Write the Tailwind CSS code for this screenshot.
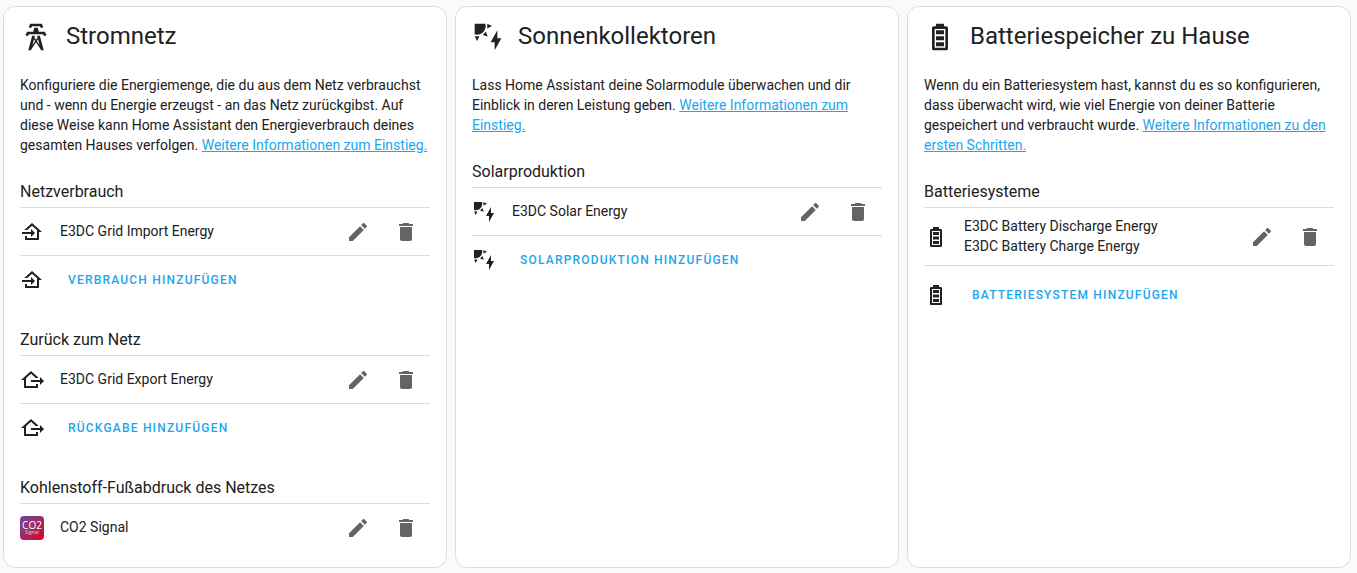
<!DOCTYPE html>
<html lang="de">
<head>
<meta charset="utf-8">
<meta name="viewport" content="width=device-width, initial-scale=1">
<title>Energie</title>
<script src="https://cdn.jsdelivr.net/npm/@tailwindcss/browser@4"></script>
</head>
<body class="min-h-screen bg-[#fafafa] font-[Roboto,sans-serif] text-sm leading-5 text-[#212121]">
<svg class="hidden" aria-hidden="true">
  <symbol id="tower" viewBox="0 0 24 24"><path d="M8.28,5.45L6.5,4.55L7.76,2H16.23L17.5,4.55L15.72,5.44L15,4H9L8.28,5.45M18.62,8H14.09L13.3,5H10.7L9.91,8H5.38L4.1,10.55L5.89,11.44L6.62,10H17.38L18.1,11.45L19.89,10.56L18.62,8M17.77,22H15.7L15.46,21.1L12,15.9L8.53,21.1L8.3,22H6.23L9.12,11H11.19L10.83,12.35L12,14.1L13.16,12.35L12.81,11H14.88L17.77,22M11.4,15L10.5,13.65L9.32,18.13L11.4,15M14.68,18.12L13.5,13.64L12.6,15L14.68,18.12Z"/></symbol>
  <symbol id="solar" viewBox="0 0 24 24"><path d="M11.45,2V5.55L15,3.77L11.45,2M10.45,8L8,10.46L11.75,11.71L10.45,8M2,11.45L3.77,15L5.55,11.45H2M10,2H2V10C2.57,10.17 3.17,10.25 3.77,10.25C7.35,10.26 10.26,7.35 10.27,3.75C10.26,3.16 10.17,2.57 10,2M17,22V16H14L19,7V13H22L17,22Z"/></symbol>
  <symbol id="battery" viewBox="0 0 24 24"><path d="M16 20H8V6H16M16.67 4H15V2H9V4H7.33C6.6 4 6 4.6 6 5.33V20.67C6 21.4 6.6 22 7.33 22H16.67C17.41 22 18 21.41 18 20.67V5.33C18 4.6 17.4 4 16.67 4M15 16H9V19H15V16M15 7H9V10H15V7M15 11.5H9V14.5H15V11.5Z"/></symbol>
  <symbol id="import" viewBox="0 0 24 24"><path d="M15 13L11 17V14H2V12H11V9L15 13M5 20V16H7V18H17V10.19L12 5.69L7.21 10H4.22L12 3L22 12H19V20H5Z"/></symbol>
  <symbol id="export" viewBox="0 0 24 24"><path d="M24 13L20 17V14H11V12H20V9L24 13M4 20V12H1L11 3L18 9.3V10H15.79L11 5.69L6 10.19V18H16V16H18V20H4Z"/></symbol>
  <symbol id="pencil" viewBox="0 0 24 24"><path d="M20.71,7.04C21.1,6.65 21.1,6 20.71,5.63L18.37,3.29C18,2.9 17.35,2.9 16.96,3.29L15.12,5.12L18.87,8.87M3,17.25V21H6.75L17.81,9.93L14.06,6.18L3,17.25Z"/></symbol>
  <symbol id="trash" viewBox="0 0 24 24"><path d="M19,4H15.5L14.5,3H9.5L8.5,4H5V6H19M6,19A2,2 0 0,0 8,21H16A2,2 0 0,0 18,19V7H6V19Z"/></symbol>
</svg>

<main class="grid grid-cols-3 gap-2 pt-1.5 pr-1.5 pb-1 pl-[3px]">

  <section class="rounded-xl border border-[#dcdcdc] bg-white px-4 pb-4">
    <h1 class="mb-2 flex h-15 items-center gap-3.5 text-2xl"><svg class="size-8 fill-current" aria-hidden="true"><use href="#tower"/></svg><span class="pb-0.5">Stromnetz</span></h1>
    <p>Konfiguriere die Energiemenge, die du aus dem Netz verbrauchst und - wenn du Energie erzeugst - an das Netz zurückgibst. Auf diese Weise kann Home Assistant den Energieverbrauch deines gesamten Hauses verfolgen. <a href="#" class="text-[#1ba6ef] underline">Weitere Informationen zum Einstieg.</a></p>

    <h2 class="mt-[25px] border-b border-[#dcdcdc] pb-[3px] text-base">Netzverbrauch</h2>
    <div class="flex h-12 items-center border-b border-[#dcdcdc]">
      <svg class="mr-4 size-6 fill-current" aria-hidden="true"><use href="#import"/></svg>
      <span class="flex-1 pb-0.5">E3DC Grid Import Energy</span>
      <button type="button" aria-label="Bearbeiten" class="grid h-full w-12 place-items-center text-[#646464]"><svg class="size-6 fill-current"><use href="#pencil"/></svg></button>
      <button type="button" aria-label="Löschen" class="grid h-full w-12 place-items-center text-[#646464]"><svg class="size-6 fill-current"><use href="#trash"/></svg></button>
    </div>
    <div class="flex h-[47px] items-center">
      <svg class="mr-4 size-6 fill-current" aria-hidden="true"><use href="#import"/></svg>
      <button type="button" class="h-9 px-2 text-xs font-medium tracking-widest text-[#1ba6ef] uppercase">Verbrauch hinzufügen</button>
    </div>

    <h2 class="mt-[25px] border-b border-[#dcdcdc] pb-[3px] text-base">Zurück zum Netz</h2>
    <div class="flex h-12 items-center border-b border-[#dcdcdc]">
      <svg class="mr-4 size-6 fill-current" aria-hidden="true"><use href="#export"/></svg>
      <span class="flex-1 pb-0.5">E3DC Grid Export Energy</span>
      <button type="button" aria-label="Bearbeiten" class="grid h-full w-12 place-items-center text-[#646464]"><svg class="size-6 fill-current"><use href="#pencil"/></svg></button>
      <button type="button" aria-label="Löschen" class="grid h-full w-12 place-items-center text-[#646464]"><svg class="size-6 fill-current"><use href="#trash"/></svg></button>
    </div>
    <div class="flex h-[47px] items-center">
      <svg class="mr-4 size-6 fill-current" aria-hidden="true"><use href="#export"/></svg>
      <button type="button" class="h-9 px-2 text-xs font-medium tracking-widest text-[#1ba6ef] uppercase">Rückgabe hinzufügen</button>
    </div>

    <h2 class="mt-[25px] border-b border-[#dcdcdc] pb-[3px] text-base">Kohlenstoff-Fußabdruck des Netzes</h2>
    <div class="flex h-[47px] items-center">
      <svg class="mr-4 size-6" viewBox="0 0 24 24" role="img" aria-label="CO2 Signal">
        <defs><linearGradient id="co2" x1="0" y1="0" x2="1" y2="1"><stop offset="0" stop-color="#67489a"/><stop offset=".5" stop-color="#a12b65"/><stop offset="1" stop-color="#dc0024"/></linearGradient></defs>
        <rect width="24" height="24" rx="4" fill="url(#co2)"/>
        <text x="12" y="13" text-anchor="middle" font-family="Open Sans, sans-serif" font-size="10" font-weight="400" fill="#fff">CO2</text>
        <text x="12" y="18" text-anchor="middle" font-family="Open Sans, sans-serif" font-size="5" fill="#f0c4d6">Signal</text>
      </svg>
      <span class="flex-1 pb-0.5">CO2 Signal</span>
      <button type="button" aria-label="Bearbeiten" class="grid h-full w-12 place-items-center text-[#646464]"><svg class="size-6 fill-current"><use href="#pencil"/></svg></button>
      <button type="button" aria-label="Löschen" class="grid h-full w-12 place-items-center text-[#646464]"><svg class="size-6 fill-current"><use href="#trash"/></svg></button>
    </div>
  </section>

  <section class="rounded-xl border border-[#dcdcdc] bg-white px-4 pb-4">
    <h1 class="mb-2 flex h-15 items-center gap-3.5 text-2xl"><svg class="size-8 fill-current" aria-hidden="true"><use href="#solar"/></svg><span class="pb-0.5">Sonnenkollektoren</span></h1>
    <p>Lass Home Assistant deine Solarmodule überwachen und dir Einblick in deren Leistung geben. <a href="#" class="text-[#1ba6ef] underline">Weitere Informationen zum Einstieg.</a></p>

    <h2 class="mt-[25px] border-b border-[#dcdcdc] pb-[3px] text-base">Solarproduktion</h2>
    <div class="flex h-12 items-center border-b border-[#dcdcdc]">
      <svg class="mr-4 size-6 fill-current" aria-hidden="true"><use href="#solar"/></svg>
      <span class="flex-1 pb-0.5">E3DC Solar Energy</span>
      <button type="button" aria-label="Bearbeiten" class="grid h-full w-12 place-items-center text-[#646464]"><svg class="size-6 fill-current"><use href="#pencil"/></svg></button>
      <button type="button" aria-label="Löschen" class="grid h-full w-12 place-items-center text-[#646464]"><svg class="size-6 fill-current"><use href="#trash"/></svg></button>
    </div>
    <div class="flex h-[47px] items-center">
      <svg class="mr-4 size-6 fill-current" aria-hidden="true"><use href="#solar"/></svg>
      <button type="button" class="h-9 px-2 text-xs font-medium tracking-widest text-[#1ba6ef] uppercase">Solarproduktion hinzufügen</button>
    </div>
  </section>

  <section class="rounded-xl border border-[#dcdcdc] bg-white px-4 pb-4">
    <h1 class="mb-2 flex h-15 items-center gap-3.5 text-2xl"><svg class="size-8 fill-current" aria-hidden="true"><use href="#battery"/></svg><span class="pb-0.5">Batteriespeicher zu Hause</span></h1>
    <p>Wenn du ein Batteriesystem hast, kannst du es so konfigurieren, dass überwacht wird, wie viel Energie von deiner Batterie gespeichert und verbraucht wurde. <a href="#" class="text-[#1ba6ef] underline">Weitere Informationen zu den ersten Schritten.</a></p>

    <h2 class="mt-[25px] border-b border-[#dcdcdc] pb-[3px] text-base">Batteriesysteme</h2>
    <div class="flex h-[58px] items-center border-b border-[#dcdcdc]">
      <svg class="mr-4 size-6 fill-current" aria-hidden="true"><use href="#battery"/></svg>
      <span class="flex-1 pb-0.5">E3DC Battery Discharge Energy<br>E3DC Battery Charge Energy</span>
      <button type="button" aria-label="Bearbeiten" class="grid h-full w-12 place-items-center text-[#646464]"><svg class="size-6 fill-current"><use href="#pencil"/></svg></button>
      <button type="button" aria-label="Löschen" class="grid h-full w-12 place-items-center text-[#646464]"><svg class="size-6 fill-current"><use href="#trash"/></svg></button>
    </div>
    <div class="flex h-[58px] items-center">
      <svg class="mr-4 size-6 fill-current" aria-hidden="true"><use href="#battery"/></svg>
      <button type="button" class="h-9 px-2 text-xs font-medium tracking-widest text-[#1ba6ef] uppercase">Batteriesystem hinzufügen</button>
    </div>
  </section>
</main>
</body>
</html>
